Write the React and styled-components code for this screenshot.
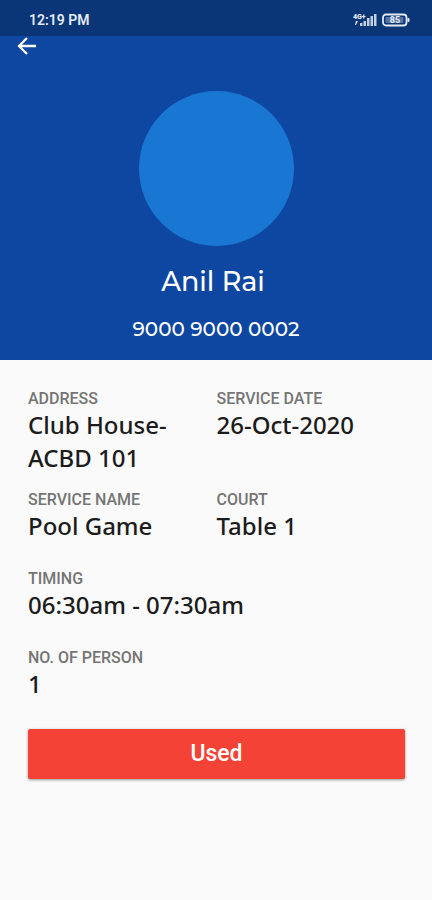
import React from 'react';
import styled, { createGlobalStyle } from 'styled-components';

const GlobalStyle = createGlobalStyle`
  *, *::before, *::after { box-sizing: border-box; }
  body {
    margin: 0;
    background: #fafafa;
    font-family: Roboto, sans-serif;
  }
`;

const Screen = styled.div`
  min-height: 100vh;
  background: #fafafa;
`;

const StatusBar = styled.div`
  display: flex;
  align-items: center;
  justify-content: space-between;
  height: 36px;
  padding: 4px 22px 0 29px;
  background: #0a3576;
  color: #e4ebf6;
`;

const Clock = styled.time`
  font-size: 14px;
  line-height: 16px;
  font-weight: 600;
`;

const StatusIcons = styled.div`
  display: flex;
  align-items: center;
  gap: 5px;
`;

const Header = styled.header`
  display: flex;
  flex-direction: column;
  align-items: center;
  padding-bottom: 20px;
  background: #0d47a1;
  color: #ffffff;
  font-family: Montserrat, Inter, sans-serif;
`;

const BackButton = styled.button`
  display: flex;
  align-self: flex-start;
  margin-left: 17px;
  padding: 0;
  border: 0;
  background: none;
  color: inherit;
  cursor: pointer;
`;

const Avatar = styled.div`
  width: 155px;
  height: 155px;
  margin-top: 35px;
  border-radius: 50%;
  background: #1976d2;
`;

const Name = styled.h1`
  margin: 18px 0 0;
  padding-right: 6px;
  font-size: 27px;
  line-height: 36px;
  font-weight: 500;
`;

const Phone = styled.p`
  margin: 18px 0 0;
  font-size: 20px;
  font-weight: 500;
  line-height: 22px;
`;

const Details = styled.main`
  padding: 30px 27px 28px 28px;
`;

const DetailGrid = styled.dl`
  display: grid;
  grid-template-columns: 1fr 1fr;
  margin: 0 0 29px;
`;

const Field = styled.div`
  grid-column: ${({ $wide }) => ($wide ? '1 / -1' : 'auto')};
  margin-top: ${({ $gap }) => $gap || 0}px;
`;

const Label = styled.dt`
  color: #757575;
  font-size: 16px;
  line-height: 18px;
  font-weight: 500;
`;

const Value = styled.dd`
  max-width: 260px;
  margin: 0;
  color: #1c1c1c;
  font-family: "Noto Sans", sans-serif;
  font-size: 24px;
  font-weight: 500;
  line-height: 33px;
`;

const UsedButton = styled.button`
  display: block;
  width: 100%;
  height: 50px;
  padding: 0;
  border: 0;
  border-radius: 2px;
  background: #f44336;
  box-shadow: 0 1px 3px rgba(0, 0, 0, 0.4);
  color: #ffffff;
  font-family: Roboto, sans-serif;
  font-size: 23px;
  font-weight: 500;
  line-height: 28px;
  cursor: pointer;
`;

const NetworkLabel = styled.text`
  font: 900 7px Roboto, sans-serif;
  fill: currentColor;
`;

const BatteryLabel = styled.text`
  font: 700 9px Roboto, sans-serif;
  fill: currentColor;
  text-anchor: middle;
`;

const SignalIcon = () => (
  <svg width="24" height="14" viewBox="0 0 24 14" role="img" aria-label="4G signal">
    <NetworkLabel x="0" y="6">4G+</NetworkLabel>
    <path d="M2 12l1-4h2l-2 4z" fill="currentColor" />
    <path d="M7 10h2.500v3H7zM10.500 8h2.500v5h-2.500zM14 5h2.500v8H14zM17.500 3h2.500v10h-2.500zM21 1h2.500v12H21z" fill="currentColor" opacity="0.85" />
  </svg>
);

const BatteryIcon = () => (
  <svg width="28" height="14" viewBox="0 0 28 14" role="img" aria-label="Battery 85 percent">
    <rect x="1" y="1.500" width="23.500" height="11" rx="3" fill="none" stroke="currentColor" strokeWidth="1.800" />
    <rect x="3.500" y="4" width="18" height="6" rx="1" fill="currentColor" opacity="0.35" />
    <path d="M25.500 5h1a1 1 0 0 1 1 1v2a1 1 0 0 1-1 1h-1z" fill="currentColor" />
    <BatteryLabel x="13" y="10">85</BatteryLabel>
  </svg>
);

const BackIcon = () => (
  <svg width="20" height="20" viewBox="0 0 20 20" fill="none" aria-hidden="true">
    <path d="M10 2L2 10l8 8M2 10h17" stroke="currentColor" strokeWidth="2.300" />
  </svg>
);

const fields = [
  { label: 'ADDRESS', value: 'Club House-ACBD 101' },
  { label: 'SERVICE DATE', value: '26-Oct-2020' },
  { label: 'SERVICE NAME', value: 'Pool Game', gap: 17 },
  { label: 'COURT', value: 'Table 1', gap: 17 },
  { label: 'TIMING', value: '06:30am - 07:30am', gap: 28, wide: true },
  { label: 'NO. OF PERSON', value: '1', gap: 28, wide: true },
];

export default function App() {
  return (
    <Screen>
      <GlobalStyle />
      <StatusBar>
        <Clock>12:19 PM</Clock>
        <StatusIcons>
          <SignalIcon />
          <BatteryIcon />
        </StatusIcons>
      </StatusBar>
      <Header>
        <BackButton type="button" aria-label="Back">
          <BackIcon />
        </BackButton>
        <Avatar />
        <Name>Anil Rai</Name>
        <Phone>9000 9000 0002</Phone>
      </Header>
      <Details>
        <DetailGrid>
          {fields.map(({ label, value, gap, wide }) => (
            <Field key={label} $gap={gap} $wide={wide}>
              <Label>{label}</Label>
              <Value>{value}</Value>
            </Field>
          ))}
        </DetailGrid>
        <UsedButton type="button">Used</UsedButton>
      </Details>
    </Screen>
  );
}
